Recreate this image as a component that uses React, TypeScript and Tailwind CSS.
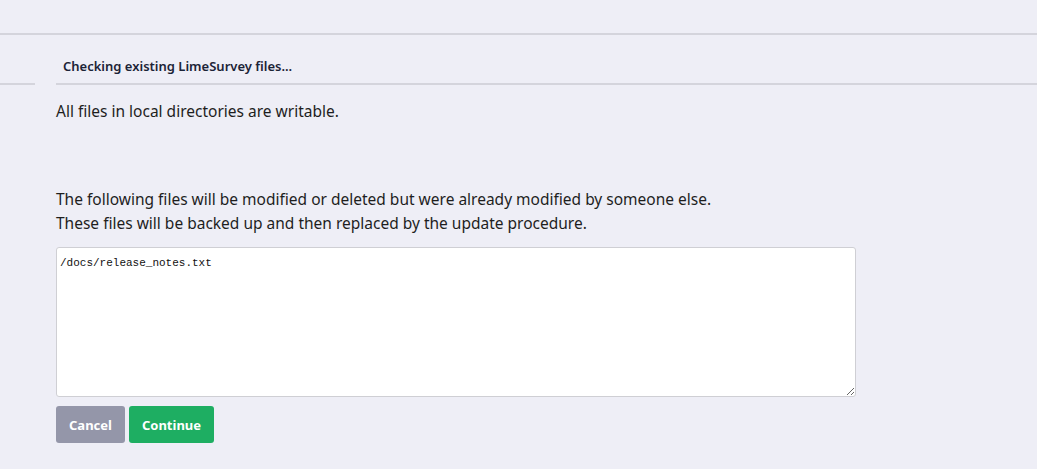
export default function App() {
   return (
      <div className="h-[469px] w-full overflow-hidden bg-[#eeeef6] font-['Noto_Sans',sans-serif] text-[#1e1e1e]">
         <div className="h-[35px] border-b-2 border-[#d4d4dc]"></div>

         <div className="flex flex-row items-start">
            <div className="flex h-[50px] w-[35px] flex-col justify-end">
               <div className="h-[2px] bg-[#d4d4dc]"></div>
            </div>

            <div className="ml-[21px] flex flex-1 flex-col">
               <div className="flex h-[50px] items-end border-b-2 border-[#d4d4dc] px-[7px] pb-[7px] text-[13px] font-semibold text-[#1b2336]">
                  Checking existing LimeSurvey files...
               </div>

               <p className="mt-[14px] text-[15.5px] leading-[24px]">All files in local directories are writable.</p>

               <p className="mt-[64px] text-[15.5px] leading-[24px]">
                  The following files will be modified or deleted but were already modified by someone else.
                  <br />
                  These files will be backed up and then replaced by the update procedure.
               </p>

               <textarea
                  readOnly
                  defaultValue="/docs/release_notes.txt"
                  className="mt-[12px] h-[150px] w-[800px] rounded-[3px] border border-[#cfcfd4] bg-white px-[3px] py-[8px] font-['Liberation_Mono',monospace] text-[11px] leading-[14px] text-[#111] outline-none"
               />

               <div className="mt-[9px] flex flex-row gap-[4px]">
                  <button className="h-[37px] rounded-[3px] bg-[#9496a9] px-[13px] pt-[2px] text-[13px] font-bold text-white">
                     Cancel
                  </button>
                  <button className="h-[37px] rounded-[3px] bg-[#1eae62] px-[13px] pt-[2px] text-[13px] font-bold text-white">
                     Continue
                  </button>
               </div>
            </div>
         </div>
      </div>
   );
}
